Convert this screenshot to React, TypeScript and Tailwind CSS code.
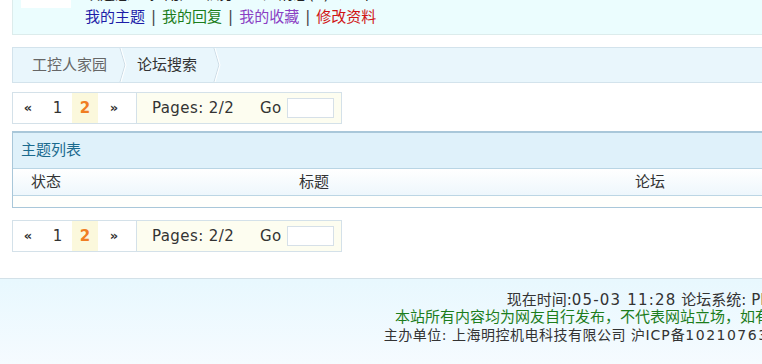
const font = { fontFamily: '"DejaVu Sans", "Noto Sans CJK SC", sans-serif' };

function Chevron() {
  return (
    <svg width="9" height="34" viewBox="0 0 9 34" className="shrink-0">
      <polyline points="1,0 6,17 1,34" fill="none" stroke="#cddbe5" strokeWidth="1" />
      <polyline points="2,0 7,17 2,34" fill="none" stroke="#ffffff" strokeWidth="1" />
    </svg>
  );
}

function Pager() {
  return (
    <div className="flex h-[32px] w-[330px] border border-[#d4e1e9] text-[15px] text-[#333]">
      <div className="flex items-stretch pr-[6px] border-r border-[#d4e1e9] bg-white">
        <span className="w-[30px] flex items-center justify-center text-[13px] font-bold">«</span>
        <span className="w-[29px] flex items-center justify-center">1</span>
        <span className="w-[26px] flex items-center justify-center bg-[#fbf8dc] text-[#f07d22] font-bold">2</span>
        <span className="w-[32px] flex items-center justify-center text-[13px] font-bold">»</span>
      </div>
      <div className="flex-1 flex items-center pl-[15px] bg-[#fdfdf0]">
        <span className="tracking-[0.4px]">Pages: 2/2</span>
        <span className="ml-[26px] tracking-[0.4px]">Go</span>
        <input className="ml-[5px] w-[47px] h-[20px] border border-[#d6e0e8] bg-white outline-none" />
      </div>
    </div>
  );
}

export default function App() {
  return (
    <div className="w-screen h-[364px] overflow-hidden bg-white" style={font}>
      <div className="w-[1100px]">
        {/* user panel */}
        <div className="ml-[12px] h-[35px] bg-[#ebfdfe] border-l border-b border-[#dcecec] overflow-hidden">
          <div className="flex items-start">
            <div className="ml-[8px] w-[50px] h-[8px] bg-white" />
            <div className="ml-[14px]">
              <div className="-mt-[15px] h-[23px] text-[15px] leading-[18px] text-[#222] whitespace-nowrap">
                欢迎您 工控用户 &nbsp;积分: 0 &nbsp;短消息(0) &nbsp;退出
              </div>
              <div className="flex items-center text-[15px] leading-[18px] whitespace-nowrap">
                <span className="text-[#1d1da8]">我的主题</span>
                <span className="mx-[6px] text-[#444]">|</span>
                <span className="text-[#1c7d1c]">我的回复</span>
                <span className="mx-[6px] text-[#444]">|</span>
                <span className="text-[#8a3fc4]">我的收藏</span>
                <span className="mx-[6px] text-[#444]">|</span>
                <span className="text-[#d01414]">修改资料</span>
              </div>
            </div>
          </div>
        </div>

        {/* breadcrumb */}
        <div className="ml-[12px] mt-[12px] h-[36px] flex items-center bg-[#e9f6fc] border border-[#d3e3ec] text-[15px]">
          <span className="pl-[19px] pr-[12px] text-[#666]">工控人家园</span>
          <Chevron />
          <span className="pl-[9px] pr-[16px] text-[#333]">论坛搜索</span>
          <Chevron />
        </div>

        <div className="ml-[12px] mt-[9px]">
          <Pager />
        </div>

        {/* topic list */}
        <div className="ml-[12px] mt-[7px] border-t-2 border-l border-b border-[#a9c7d9] text-[15px]">
          <div className="h-[36px] flex items-center pl-[8px] bg-[#dff1fa] text-[#1a6a8e] border-b border-[#b9d5e4]">
            主题列表
          </div>
          <div className="h-[27px] flex items-center bg-gradient-to-b from-white to-[#eef7fc] text-[#333] border-b border-[#bcd6e4]">
            <span className="pl-[18px] w-[286px]">状态</span>
            <span className="w-[336px]">标题</span>
            <span>论坛</span>
          </div>
          <div className="h-[11px] bg-[#fffffc]" />
        </div>

        <div className="ml-[12px] mt-[12px]">
          <Pager />
        </div>

        {/* footer */}
        <div className="mt-[26px] h-[90px] border-t border-[#d3e1e8] bg-gradient-to-b from-[#e8f8fe] to-[#f6fbff] pt-[13px] pr-[210px] text-right text-[15px] leading-[17px] text-[#333] whitespace-nowrap">
          <div>
            现在时间:<span className="tracking-[1.2px]">05-03 11:28</span> 论坛系统: PHPWind 8.7 Code
          </div>
          <div className="text-[#1c7d1c]">本站所有内容均为网友自行发布，不代表网站立场，如有侵权请与我们联系</div>
          <div className="text-[14px] leading-[18px] tracking-[0.5px]">
            主办单位: 上海明控机电科技有限公司 沪<span className="tracking-[1px]">ICP</span>备<span className="tracking-[1.5px]">10210763</span>号-1 技术支持服务
          </div>
        </div>
      </div>
    </div>
  );
}
